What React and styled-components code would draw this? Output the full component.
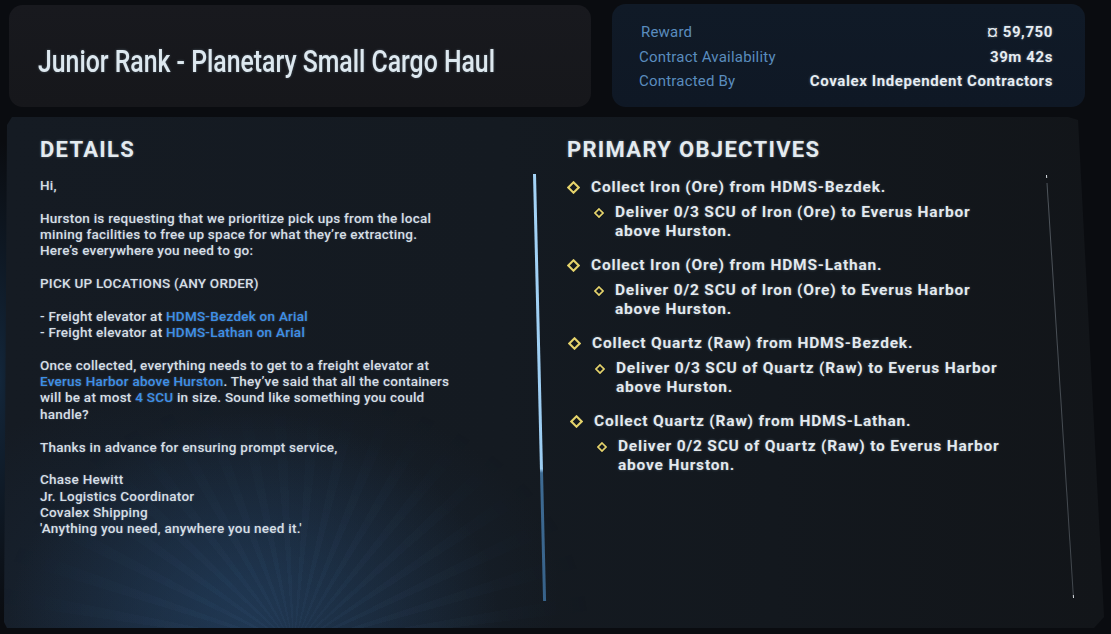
import React from "react";
import styled, { createGlobalStyle } from "styled-components";

const Global = createGlobalStyle`
  html, body {
    margin: 0;
    padding: 0;
    background: #0a0c10;
  }
  body {
    width: 1111px;
    height: 634px;
    overflow: hidden;
    font-family: Roboto, "Noto Sans", "DejaVu Sans", sans-serif;
    background:
      radial-gradient(ellipse 40px 300px at 0 380px, rgba(30, 70, 110, 0.45), transparent 80%),
      #0a0c10;
  }
`;

const Page = styled.div`
  display: flex;
  flex-direction: column;
  gap: 10px;
  padding-top: 4px;
`;

const TopRow = styled.div`
  display: flex;
  align-items: flex-start;
  gap: 21px;
  padding-left: 9px;
`;

const TitleCard = styled.div`
  width: 582px;
  height: 102px;
  margin-top: 1px;
  box-sizing: border-box;
  border-radius: 14px;
  background: linear-gradient(180deg, #18191e 0%, #16171b 100%);
  display: flex;
  align-items: center;
  padding-left: 29px;
  overflow: hidden;
`;

/* no condensed face is installed, so the game's narrow title type is squeezed */
const Title = styled.h1`
  margin: 9px 0 0;
  display: inline-block;
  transform: scaleX(0.775);
  transform-origin: left center;
  font-family: Roboto, "Noto Sans", sans-serif;
  font-weight: 500;
  font-size: 32px;
  color: #dde8ef;
  text-shadow: 0 0 3px rgba(190, 220, 240, 0.35);
  white-space: nowrap;
`;

const RewardCard = styled.div`
  width: 473px;
  height: 103px;
  box-sizing: border-box;
  border-radius: 14px;
  background: linear-gradient(180deg, #101a27 0%, #0f1825 100%);
  padding: 16px 32px 0 27px;
  display: grid;
  grid-template-columns: auto 1fr;
  grid-auto-rows: 24.5px;
  align-items: center;
`;

const Label = styled.div`
  font-size: 15px;
  color: #5a8cbe;
  margin-left: ${(p) => p.shift || 0}px;
  letter-spacing: 0.2px;
`;

const Value = styled.div`
  font-size: 15px;
  font-weight: 700;
  color: #e6ecf1;
  text-align: right;
  letter-spacing: 0.6px;
  text-shadow: 0 0 3px rgba(200, 225, 245, 0.35);
`;

const Panel = styled.div`
  position: relative;
  margin-left: 4px;
  width: 1100px;
  height: 511px;
  box-sizing: border-box;
  clip-path: polygon(8px 0, 1064px 0, 1074px 3px, 1100px 500px, 1090px 511px, 3px 511px, 0 505px, 3px 8px);
  background:
    radial-gradient(ellipse 330px 300px at 250px 520px, rgba(45, 85, 130, 0.42), transparent 75%),
    radial-gradient(ellipse 420px 260px at 220px 470px, rgba(30, 60, 95, 0.35), transparent 80%),
    linear-gradient(90deg, #151b23 0%, #141a21 45%, #13181e 70%, #121519 100%);
  padding: 20px 57px 0 36px;
  display: grid;
  grid-template-columns: 493px 3px 1fr 1px;
  align-items: start;

  &::before {
    content: "";
    position: absolute;
    inset: 0;
    pointer-events: none;
    background: repeating-conic-gradient(
      from 270deg at 290px 530px,
      rgba(110, 160, 215, 0.045) 0deg 3deg,
      transparent 3deg 8.5deg
    );
    -webkit-mask-image: radial-gradient(ellipse 360px 300px at 290px 520px, #000 15%, transparent 85%);
    mask-image: radial-gradient(ellipse 360px 300px at 290px 520px, #000 15%, transparent 85%);
  }

  > * {
    position: relative;
  }
`;

const Column = styled.div`
  padding-left: ${(p) => p.pad || 0}px;
`;

const Heading = styled.h2`
  margin: 0 0 14px;
  font-size: 22px;
  line-height: 26px;
  font-weight: 700;
  letter-spacing: ${(p) => p.spacing || 1.3}px;
  color: #e4ebf0;
  text-shadow: 0 0 3px rgba(200, 225, 245, 0.35);
`;

const Body = styled.div`
  font-size: 13.5px;
  line-height: 16.35px;
  font-weight: 500;
  letter-spacing: 0.25px;
  color: #d6dee5;
  white-space: nowrap;
  text-shadow: 0 0 2px rgba(200, 225, 245, 0.3);
`;

const Para = styled.p`
  margin: 0 0 16.35px;
`;

const Link = styled.span`
  color: #3b8fe8;
`;

const Divider = styled.div`
  margin-top: 37px;
  height: 427px;
  width: 3px;
  transform: skewX(1.35deg);
  transform-origin: top;
  background: linear-gradient(180deg, #a4d3f6 0%, #9ccdf2 69%, #3e6b93 70%, #37628a 100%);
`;

const Track = styled.div`
  margin-top: 38px;
  height: 423px;
  width: 1px;
  transform: skewX(3.65deg);
  transform-origin: top;
  background: linear-gradient(180deg, #d8dde2 0 3px, transparent 3px 8px, rgba(150, 160, 170, 0.45) 8px, rgba(150, 160, 170, 0.35) calc(100% - 3px), #d8dde2 calc(100% - 3px));
`;

const Objectives = styled.div`
  display: flex;
  flex-direction: column;
  gap: 14px;
`;

const Group = styled.div`
  display: flex;
  flex-direction: column;
  gap: 6px;
  margin-left: ${(p) => p.shift || 0}px;
`;

const Row = styled.div`
  display: flex;
  align-items: flex-start;
  gap: 11px;
  padding-left: ${(p) => (p.sub ? 27 : 0)}px;
  font-size: 15.5px;
  font-weight: 700;
  letter-spacing: 0.8px;
  line-height: ${(p) => (p.sub ? 19 : 20)}px;
  color: #e3e9ee;
  text-shadow: 0 0 3px rgba(200, 225, 245, 0.3);
`;

const Mark = styled.span`
  flex: none;
  display: flex;
  align-items: center;
  height: ${(p) => (p.sub ? 19 : 20)}px;
`;

const Diamond = ({ size, sub }) => (
  <Mark sub={sub}>
    <svg width={size} height={size} viewBox="0 0 12 12">
      <polygon
        points="6,1.2 10.8,6 6,10.8 1.2,6"
        fill="none"
        stroke="#e5d36b"
        strokeWidth={sub ? 2.1 : 1.9}
      />
    </svg>
  </Mark>
);

const objectives = [
  { main: "Collect Iron (Ore) from HDMS-Bezdek.", sub: ["Deliver 0/3 SCU of Iron (Ore) to Everus Harbor", "above Hurston."], shift: 0 },
  { main: "Collect Iron (Ore) from HDMS-Lathan.", sub: ["Deliver 0/2 SCU of Iron (Ore) to Everus Harbor", "above Hurston."], shift: 0 },
  { main: "Collect Quartz (Raw) from HDMS-Bezdek.", sub: ["Deliver 0/3 SCU of Quartz (Raw) to Everus Harbor", "above Hurston."], shift: 1 },
  { main: "Collect Quartz (Raw) from HDMS-Lathan.", sub: ["Deliver 0/2 SCU of Quartz (Raw) to Everus Harbor", "above Hurston."], shift: 3 },
];

export default function App() {
  return (
    <>
      <Global />
      <Page>
        <TopRow>
          <TitleCard>
            <Title>Junior Rank - Planetary Small Cargo Haul</Title>
          </TitleCard>
          <RewardCard>
            <Label shift={2}>Reward</Label>
            <Value>¤ 59,750</Value>
            <Label>Contract Availability</Label>
            <Value>39m 42s</Value>
            <Label>Contracted By</Label>
            <Value>Covalex Independent Contractors</Value>
          </RewardCard>
        </TopRow>

        <Panel>
          <Column>
            <Heading>DETAILS</Heading>
            <Body>
              <Para>Hi,</Para>
              <Para>
                Hurston is requesting that we prioritize pick ups from the local
                <br />
                mining facilities to free up space for what they’re extracting.
                <br />
                Here’s everywhere you need to go:
              </Para>
              <Para>PICK UP LOCATIONS (ANY ORDER)</Para>
              <Para>
                - Freight elevator at <Link>HDMS-Bezdek on Arial</Link>
                <br />- Freight elevator at <Link>HDMS-Lathan on Arial</Link>
              </Para>
              <Para>
                Once collected, everything needs to get to a freight elevator at
                <br />
                <Link>Everus Harbor above Hurston</Link>. They’ve said that all the containers
                <br />
                will be at most <Link>4 SCU</Link> in size. Sound like something you could
                <br />
                handle?
              </Para>
              <Para>Thanks in advance for ensuring prompt service,</Para>
              <Para>
                Chase Hewitt
                <br />
                Jr. Logistics Coordinator
                <br />
                Covalex Shipping
                <br />
                'Anything you need, anywhere you need it.'
              </Para>
            </Body>
          </Column>

          <Divider />

          <Column pad={31}>
            <Heading>PRIMARY OBJECTIVES</Heading>
            <Objectives>
              {objectives.map((o) => (
                <Group key={o.main} shift={o.shift}>
                  <Row>
                    <Diamond size={13} />
                    <span>{o.main}</span>
                  </Row>
                  <Row sub>
                    <Diamond size={10} sub />
                    <span>
                      {o.sub[0]}
                      <br />
                      {o.sub[1]}
                    </span>
                  </Row>
                </Group>
              ))}
            </Objectives>
          </Column>

          <Track />
        </Panel>
      </Page>
    </>
  );
}
